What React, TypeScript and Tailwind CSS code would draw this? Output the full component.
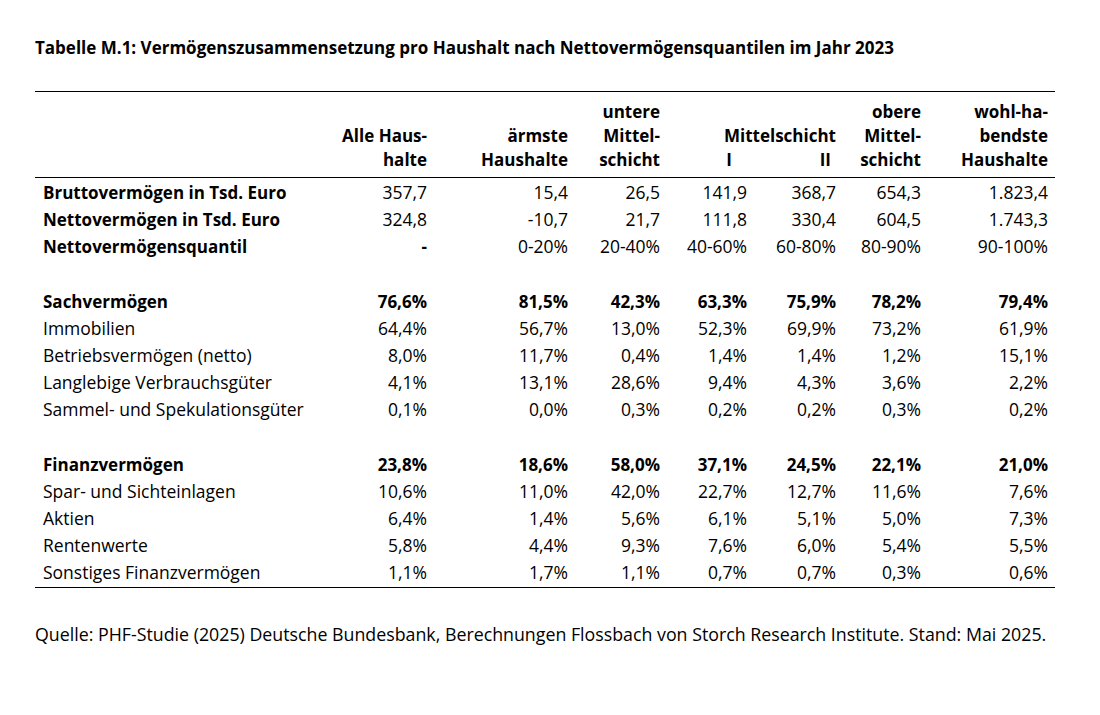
import React from "react";

type Row = { label: string; vals: string[]; bold?: boolean; valBold?: boolean; gap?: boolean };

const rows: Row[] = [
  { label: "Bruttovermögen in Tsd. Euro", vals: ["357,7", "15,4", "26,5", "141,9", "368,7", "654,3", "1.823,4"], bold: true },
  { label: "Nettovermögen in Tsd. Euro", vals: ["324,8", "-10,7", "21,7", "111,8", "330,4", "604,5", "1.743,3"], bold: true },
  { label: "Nettovermögensquantil", vals: ["-", "0-20%", "20-40%", "40-60%", "60-80%", "80-90%", "90-100%"], bold: true },
  { label: "", vals: [], gap: true },
  { label: "Sachvermögen", vals: ["76,6%", "81,5%", "42,3%", "63,3%", "75,9%", "78,2%", "79,4%"], bold: true, valBold: true },
  { label: "Immobilien", vals: ["64,4%", "56,7%", "13,0%", "52,3%", "69,9%", "73,2%", "61,9%"] },
  { label: "Betriebsvermögen (netto)", vals: ["8,0%", "11,7%", "0,4%", "1,4%", "1,4%", "1,2%", "15,1%"] },
  { label: "Langlebige Verbrauchsgüter", vals: ["4,1%", "13,1%", "28,6%", "9,4%", "4,3%", "3,6%", "2,2%"] },
  { label: "Sammel- und Spekulationsgüter", vals: ["0,1%", "0,0%", "0,3%", "0,2%", "0,2%", "0,3%", "0,2%"] },
  { label: "", vals: [], gap: true },
  { label: "Finanzvermögen", vals: ["23,8%", "18,6%", "58,0%", "37,1%", "24,5%", "22,1%", "21,0%"], bold: true, valBold: true },
  { label: "Spar- und Sichteinlagen", vals: ["10,6%", "11,0%", "42,0%", "22,7%", "12,7%", "11,6%", "7,6%"] },
  { label: "Aktien", vals: ["6,4%", "1,4%", "5,6%", "6,1%", "5,1%", "5,0%", "7,3%"] },
  { label: "Rentenwerte", vals: ["5,8%", "4,4%", "9,3%", "7,6%", "6,0%", "5,4%", "5,5%"] },
  { label: "Sonstiges Finanzvermögen", vals: ["1,1%", "1,7%", "1,1%", "0,7%", "0,7%", "0,3%", "0,6%"] },
];

const grid = "grid grid-cols-[265px_134px_141px_92px_87px_89px_85px_127px]";

export default function App() {
  return (
    <div
      className="w-[1100px] h-[715px] bg-white text-black text-[17.5px]"
      style={{ fontFamily: "'Open Sans', Lato, sans-serif" }}
    >
      <div className="pl-[35px] pt-[37px]">
        <div className="h-[22px] leading-[22px] font-bold text-[17px] whitespace-nowrap">
          Tabelle M.1: Vermögenszusammensetzung pro Haushalt nach Nettovermögensquantilen im Jahr 2023
        </div>
        <div className="w-[1020px] mt-[32px] border-t border-b border-black">
          <div className={`${grid} font-bold text-[17px] leading-[24px] pt-[8px] pb-[5px] h-[86px] border-b border-black`}>
            <div />
            <div className="flex flex-col justify-end items-end pr-[7px]">
              <span>Alle Haus-</span>
              <span>halte</span>
            </div>
            <div className="flex flex-col justify-end items-end pr-[7px]">
              <span>ärmste</span>
              <span>Haushalte</span>
            </div>
            <div className="flex flex-col justify-end items-end pr-[7px]">
              <span>untere</span>
              <span>Mittel-</span>
              <span>schicht</span>
            </div>
            <div className="col-span-2 flex flex-col justify-end">
              <div className="text-right pr-[7px]">Mittelschicht</div>
              <div className="grid grid-cols-[87px_89px]">
                <span className="text-right pr-[22px]">I</span>
                <span className="text-right pr-[12px]">II</span>
              </div>
            </div>
            <div className="flex flex-col justify-end items-end pr-[7px]">
              <span>obere</span>
              <span>Mittel-</span>
              <span>schicht</span>
            </div>
            <div className="flex flex-col justify-end items-end pr-[7px]">
              <span>wohl-ha-</span>
              <span>bendste</span>
              <span>Haushalte</span>
            </div>
          </div>
          <div className="pt-[1px] pb-[1px]">
            {rows.map((r, i) =>
              r.gap ? (
                <div key={i} className="h-[28px]" />
              ) : (
                <div key={i} className={`${grid} h-[27px] items-center whitespace-nowrap`}>
                  <div className={`pl-[8px] ${r.bold ? "font-bold text-[17px]" : ""}`}>{r.label}</div>
                  {r.vals.map((v, j) => (
                    <div
                      key={j}
                      className={`text-right pr-[7px] ${r.valBold || v === "-" ? "font-bold text-[17px]" : ""}`}
                    >
                      {v}
                    </div>
                  ))}
                </div>
              )
            )}
          </div>
        </div>
        <div className="mt-[35px] h-[22px] leading-[22px] text-[17.8px] whitespace-nowrap">
          Quelle: PHF-Studie (2025) Deutsche Bundesbank, Berechnungen Flossbach von Storch Research Institute. Stand: Mai 2025.
        </div>
      </div>
    </div>
  );
}
